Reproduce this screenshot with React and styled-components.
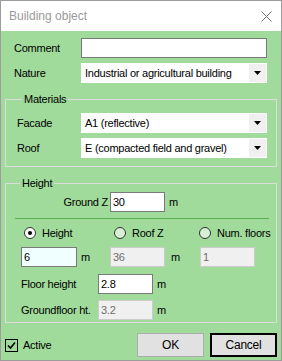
import styled, {createGlobalStyle} from 'styled-components';

const GlobalStyle = createGlobalStyle`
  html, body {
    margin: 0;
    padding: 0;
    background: #ffffff;
  }
  body {
    font-family: 'Liberation Sans', Arial, sans-serif;
    font-size: 11px;
    color: #000;
  }
  * {
    box-sizing: border-box;
  }
`;

const Window = styled.div`
  width: 282px;
  height: 361px;
  border: 1px solid #9c9c9c;
  display: flex;
  flex-direction: column;
  background: #ffffff;
`;

const TitleBar = styled.div`
  height: 30px;
  display: flex;
  align-items: center;
  justify-content: space-between;
  padding: 0 9px 0 8px;
  background: #ffffff;
`;

const Title = styled.span`
  font-size: 12px;
  color: #9a9a9a;
`;

const Body = styled.div`
  flex: 1;
  background: #a0db9b;
  display: flex;
  flex-direction: column;
  padding-top: 7px;
  letter-spacing: -0.25px;
  white-space: nowrap;
`;

const TopRows = styled.div`
  display: flex;
  flex-direction: column;
  gap: 5px;
  padding-left: 13px;
`;

const Row = styled.div`
  display: flex;
  align-items: center;
  height: 20px;
  padding-left: ${p => p.$indent || 0}px;
  margin-top: ${p => p.$top || 0}px;
`;

const Label = styled.span`
  width: ${p => p.$width}px;
  flex: none;
  text-align: ${p => p.$align || 'left'};
  padding-right: ${p => (p.$align === 'right' ? 2 : 0)}px;
`;

const TextBox = styled.div`
  width: ${p => p.$width}px;
  height: 20px;
  flex: none;
  display: flex;
  align-items: center;
  padding-left: 2px;
  border: 1px solid ${p => (p.$disabled ? '#cccccc' : '#7a7a7a')};
  background: ${p => (p.$disabled ? '#f0f0f0' : p.$focus ? '#f0ffff' : '#ffffff')};
  color: ${p => (p.$disabled ? '#6d6d6d' : '#000')};
`;

const Unit = styled.span`
  margin-left: ${p => p.$gap || 4}px;
`;

const Combo = styled.div`
  width: 186px;
  height: 20px;
  display: flex;
  align-items: center;
  justify-content: space-between;
  background: #ffffff;
  padding: 1px 1px 1px 4px;
`;

const DropButton = styled.span`
  width: 17px;
  height: 18px;
  background: #f0f0f0;
  display: flex;
  align-items: center;
  justify-content: center;
`;

const Group = styled.fieldset`
  margin: 10px 0 0 4px;
  width: 272px;
  min-width: 0;
  border: 1px solid #dcdcdc;
  padding: ${p => p.$pad};
  display: flex;
  flex-direction: column;
  gap: 5px;
`;

const Legend = styled.legend`
  padding: 0 2px;
  margin-left: 5px;
  line-height: 13px;
`;

const Separator = styled.div`
  height: 1px;
  width: 254px;
  background: #55b152;
  margin: 1px 0 2px;
`;

const RadioRow = styled.div`
  display: flex;
  align-items: center;
  height: 14px;
  padding-left: 9px;
`;

const RadioItem = styled.label`
  display: flex;
  align-items: center;
  gap: 6px;
  flex: none;
  width: ${p => (p.$width ? `${p.$width}px` : 'auto')};
`;

const RadioCircle = styled.span`
  width: 12px;
  height: 12px;
  flex: none;
  border-radius: 50%;
  border: 1px solid #333333;
  background: ${p => (p.$checked ? '#ffffff' : '#d8efd5')};
  display: flex;
  align-items: center;
  justify-content: center;
  &::after {
    content: '';
    display: ${p => (p.$checked ? 'block' : 'none')};
    width: 4px;
    height: 4px;
    border-radius: 50%;
    background: #000;
  }
`;

const Cell = styled.div`
  display: flex;
  align-items: center;
  width: ${p => p.$width}px;
`;

const BottomBar = styled.div`
  display: flex;
  align-items: center;
  justify-content: space-between;
  margin-top: 10px;
  padding: 0 4px 0 4px;
`;

const CheckLabel = styled.label`
  display: flex;
  align-items: center;
  gap: 5px;
`;

const Buttons = styled.div`
  display: flex;
  gap: 6px;
`;

const Button = styled.button`
  width: 67px;
  height: 24px;
  font-family: inherit;
  font-size: 12px;
  letter-spacing: -0.25px;
  color: #000;
  background: #e1e1e1;
  border: ${p => (p.$default ? '2px solid #000' : '1px solid #adadad')};
  padding: 0;
`;

function Arrow() {
  return (
    <svg width='7' height='4' viewBox='0 0 7 4'>
      <path d='M0 0h7L3.5 4z' fill='#000' />
    </svg>
  );
}

function ComboBox({value}) {
  return (
    <Combo>
      <span>{value}</span>
      <DropButton>
        <Arrow />
      </DropButton>
    </Combo>
  );
}

function Radio({label, checked, width}) {
  return (
    <RadioItem $width={width}>
      <RadioCircle $checked={checked} />
      {label}
    </RadioItem>
  );
}

export default function App() {
  return (
    <>
      <GlobalStyle />
      <Window>
        <TitleBar>
          <Title>Building object</Title>
          <svg width='11' height='11' viewBox='0 0 11 11'>
            <path d='M0.5 0.5l10 10M10.5 0.5l-10 10' stroke='#707070' strokeWidth='1' />
          </svg>
        </TitleBar>
        <Body>
          <TopRows>
            <Row>
              <Label $width={67}>Comment</Label>
              <TextBox $width={186} />
            </Row>
            <Row>
              <Label $width={67}>Nature</Label>
              <ComboBox value='Industrial or agricultural building' />
            </Row>
          </TopRows>

          <Group $pad='7px 7px 8px 11px'>
            <Legend>Materials</Legend>
            <Row>
              <Label $width={64}>Facade</Label>
              <ComboBox value='A1 (reflective)' />
            </Row>
            <Row>
              <Label $width={64}>Roof</Label>
              <ComboBox value='E (compacted field and gravel)' />
            </Row>
          </Group>

          <Group $pad='2px 7px 2px 9px'>
            <Legend>Height</Legend>
            <Row>
              <Label $width={95} $align='right'>
                Ground Z
              </Label>
              <TextBox $width={55}>30</TextBox>
              <Unit>m</Unit>
            </Row>
            <Separator />
            <RadioRow>
              <Radio label='Height' checked width={90} />
              <Radio label='Roof Z' width={85} />
              <Radio label='Num. floors' />
            </RadioRow>
            <Row $indent={6} $top={2}>
              <Cell $width={89}>
                <TextBox $width={56} $focus>
                  6
                </TextBox>
                <Unit>m</Unit>
              </Cell>
              <Cell $width={90}>
                <TextBox $width={55} $disabled>
                  36
                </TextBox>
                <Unit $gap={6}>m</Unit>
              </Cell>
              <Cell>
                <TextBox $width={55} $disabled>
                  1
                </TextBox>
              </Cell>
            </Row>
            <Row $indent={6} $top={2}>
              <Label $width={77}>Floor height</Label>
              <TextBox $width={55}>2.8</TextBox>
              <Unit>m</Unit>
            </Row>
            <Row $indent={6} $top={1}>
              <Label $width={77}>Groundfloor ht.</Label>
              <TextBox $width={55} $disabled>
                3.2
              </TextBox>
              <Unit>m</Unit>
            </Row>
          </Group>

          <BottomBar>
            <CheckLabel>
              <svg width='13' height='13' viewBox='0 0 13 13'>
                <rect x='0.5' y='0.5' width='12' height='12' fill='#a0db9b' stroke='#000' />
                <path d='M3 6.5l2.5 2.5L10 3.5' fill='none' stroke='#000' strokeWidth='1.6' />
              </svg>
              Active
            </CheckLabel>
            <Buttons>
              <Button>OK</Button>
              <Button $default>Cancel</Button>
            </Buttons>
          </BottomBar>
        </Body>
      </Window>
    </>
  );
}
